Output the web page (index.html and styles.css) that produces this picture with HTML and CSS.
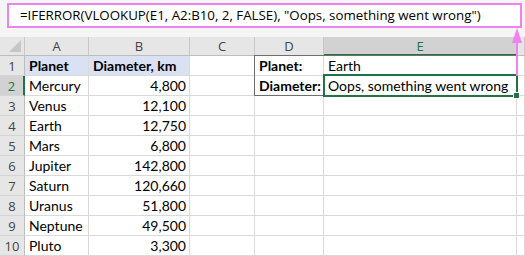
FILE: index.html
```html
<!DOCTYPE html>
<html>
<head>
<meta charset="utf-8">
<link rel="stylesheet" href="styles.css">
</head>
<body>
<div class="app">
  <div class="fbar-area">
    <div class="fbar">=IFERROR(VLOOKUP(E1, A2:B10, 2, FALSE), "Oops, something went wrong")</div>
  </div>
  <div class="sheet">
    <div class="hd corner"><span class="tri"></span></div>
    <div class="hd col">A</div>
    <div class="hd col">B</div>
    <div class="hd col">C</div>
    <div class="hd col">D</div>
    <div class="hd col sel">E</div>
    <div class="hd col"></div>

    <div class="hd rn">1</div>
    <div class="c th">Planet</div>
    <div class="c th">Diameter, km</div>
    <div class="c"></div>
    <div class="c b">Planet:</div>
    <div class="c">Earth</div>
    <div class="c"></div>

    <div class="hd rn sel">2</div>
    <div class="c">Mercury</div>
    <div class="c n">4,800</div>
    <div class="c"></div>
    <div class="c b">Diameter:</div>
    <div class="c">Oops, something went wrong</div>
    <div class="c"></div>

    <div class="hd rn">3</div>
    <div class="c">Venus</div>
    <div class="c n">12,100</div>
    <div class="c"></div><div class="c"></div><div class="c"></div><div class="c"></div>

    <div class="hd rn">4</div>
    <div class="c">Earth</div>
    <div class="c n">12,750</div>
    <div class="c"></div><div class="c"></div><div class="c"></div><div class="c"></div>

    <div class="hd rn">5</div>
    <div class="c">Mars</div>
    <div class="c n">6,800</div>
    <div class="c"></div><div class="c"></div><div class="c"></div><div class="c"></div>

    <div class="hd rn">6</div>
    <div class="c">Jupiter</div>
    <div class="c n">142,800</div>
    <div class="c"></div><div class="c"></div><div class="c"></div><div class="c"></div>

    <div class="hd rn">7</div>
    <div class="c">Saturn</div>
    <div class="c n">120,660</div>
    <div class="c"></div><div class="c"></div><div class="c"></div><div class="c"></div>

    <div class="hd rn">8</div>
    <div class="c">Uranus</div>
    <div class="c n">51,800</div>
    <div class="c"></div><div class="c"></div><div class="c"></div><div class="c"></div>

    <div class="hd rn">9</div>
    <div class="c">Neptune</div>
    <div class="c n">49,500</div>
    <div class="c"></div><div class="c"></div><div class="c"></div><div class="c"></div>

    <div class="hd rn">10</div>
    <div class="c">Pluto</div>
    <div class="c n">3,300</div>
    <div class="c"></div><div class="c"></div><div class="c"></div><div class="c"></div>

    <div class="outline"></div>
    <div class="selbox"><span class="handle"></span></div>
  </div>
  <svg class="arrow" width="14" height="50" viewBox="0 0 14 50">
    <line x1="7" y1="10" x2="7" y2="48" stroke="#EE82EE" stroke-width="2"/>
    <polygon points="7,0 2,15 12,15" fill="#EE82EE"/>
  </svg>
</div>
</body>
</html>
```

FILE: styles.css
```css
html, body {
  margin: 0;
  padding: 0;
  background: #ffffff;
}
.app {
  position: relative;
  width: 525px;
  height: 256px;
  overflow: hidden;
  font-family: Lato, "Liberation Sans", sans-serif;
}
.fbar-area {
  height: 37px;
  background: #f5f5f5;
  padding: 3px 0 0 7px;
  box-sizing: border-box;
}
.fbar {
  width: 515px;
  height: 25px;
  box-sizing: border-box;
  border: 2px solid #EE82EE;
  background: #ffffff;
  font-family: "Open Sans", "Noto Sans", sans-serif;
  font-size: 13.3px;
  line-height: 21px;
  padding-left: 11px;
  color: #000;
  white-space: nowrap;
}
.sheet {
  position: relative;
  display: grid;
  grid-template-columns: 25px 64px 101px 65px 69px 193px 1fr;
  grid-template-rows: 19px repeat(10, 20px);
}
.hd {
  background: #e6e6e6;
  color: #444;
  font-family: "Open Sans", "Noto Sans", sans-serif;
  font-size: 13px;
  display: flex;
  align-items: center;
  justify-content: center;
  box-sizing: border-box;
}
.col {
  border-right: 1px solid #c8c8c8;
  border-bottom: 1px solid #bdbdbd;
}
.corner {
  position: relative;
  border-right: 1px solid #c8c8c8;
  border-bottom: 1px solid #bdbdbd;
}
.tri {
  position: absolute;
  right: 3px;
  bottom: 3px;
  width: 0;
  height: 0;
  border-left: 12px solid transparent;
  border-bottom: 12px solid #c6c6c6;
}
.col.sel {
  background: #d2d2d2;
  color: #217346;
  border-bottom: 2px solid #217346;
}
.rn {
  border-right: 1px solid #bdbdbd;
  border-bottom: 1px solid #d4d4d4;
}
.rn.sel {
  background: #d2d2d2;
  color: #217346;
  border-right: 2px solid #217346;
}
.c {
  box-sizing: border-box;
  border-right: 1px solid #d9d9d9;
  border-bottom: 1px solid #d9d9d9;
  font-size: 14px;
  color: #000;
  padding: 0 3px 0 4px;
  line-height: 19px;
  white-space: nowrap;
  overflow: visible;
}
.th {
  background: #d9e1f2;
  font-weight: bold;
}
.b {
  font-weight: bold;
}
.n {
  text-align: right;
}
.outline {
  position: absolute;
  left: 254px;
  top: 18px;
  width: 264px;
  height: 41px;
  border: 1px solid #6e6e6e;
  box-sizing: border-box;
  pointer-events: none;
}
.selbox {
  position: absolute;
  left: 323px;
  top: 37px;
  width: 195px;
  height: 23px;
  border: 2px solid #217346;
  box-sizing: border-box;
}
.handle {
  position: absolute;
  right: -4px;
  bottom: -4px;
  width: 5px;
  height: 5px;
  background: #217346;
  border: 1px solid #fff;
}
.arrow {
  position: absolute;
  left: 510px;
  top: 28px;
}
```
